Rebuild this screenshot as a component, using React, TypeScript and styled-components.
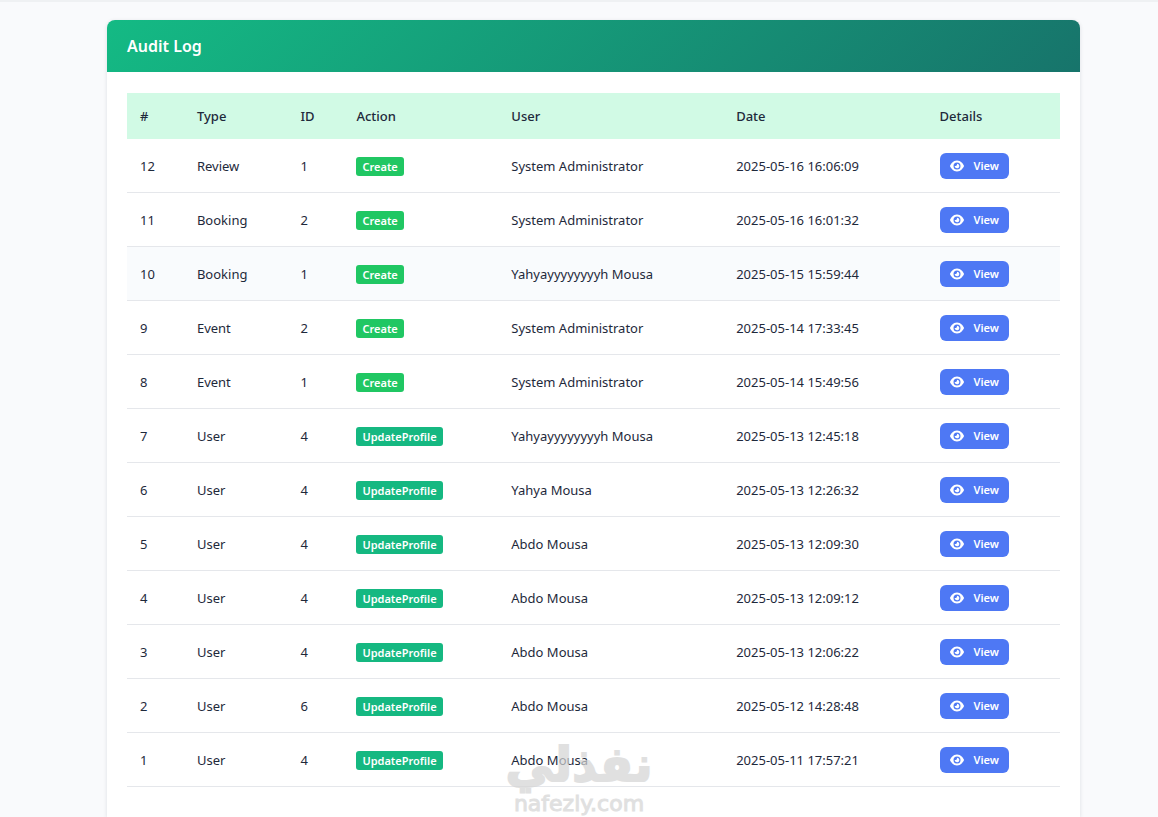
import React from "react";
import styled, { createGlobalStyle } from "styled-components";
import { FaEye } from "react-icons/fa6";

const GlobalStyle = createGlobalStyle`
  *, *::before, *::after { box-sizing: border-box; }
  body {
    margin: 0;
    background: #f9fafc;
    color: #1e293b;
    font-family: "Segoe UI", "Noto Sans", "Open Sans", sans-serif;
    font-size: 13px;
    line-height: 20px;
  }
`;

const Page = styled.div`
  position: relative;
  display: flex;
  flex-direction: column;
  min-height: 100vh;
  padding: 18px 78px 0 107px;
  border-top: 2px solid #eff1f3;
`;

const Card = styled.main`
  flex: 1;
  background: #fff;
  border-radius: 8px 8px 0 0;
  box-shadow: 0 1px 4px rgba(15, 23, 42, 0.12);
`;

const CardHeader = styled.header`
  padding: 14px 20px;
  border-radius: 8px 8px 0 0;
  background: linear-gradient(135deg, #14ba84 0%, #17746b 100%);
`;

const Title = styled.h1`
  margin: 0;
  color: #fff;
  font-size: 16px;
  font-weight: 600;
  line-height: 24px;
`;

const CardBody = styled.div`
  padding: 21px 20px;
`;

const Table = styled.table`
  width: 100%;
  table-layout: fixed;
  border-collapse: separate;
  border-spacing: 0;
`;

const HeadCell = styled.th<{ $width?: string }>`
  width: ${(p) => p.$width ?? "auto"};
  padding: 13px;
  background: #d1fae5;
  text-align: left;
  font-weight: 500;
`;

const Row = styled.tr<{ $active?: boolean }>`
  background: ${(p) => (p.$active ? "#f9fbfd" : "transparent")};
`;

const Cell = styled.td`
  height: 54px;
  padding: 0 13px;
  border-bottom: 1px solid #e5e7eb;
  vertical-align: middle;
  white-space: nowrap;
`;

const Badge = styled.span<{ $kind: Action }>`
  display: inline-block;
  padding: 0 6px;
  border-radius: 3px;
  background: ${(p) => (p.$kind === "Create" ? "#20c763" : "#15b881")};
  color: #fff;
  font-size: 11px;
  font-weight: 600;
  line-height: 19px;
  vertical-align: middle;
`;

const ViewButton = styled.button`
  display: flex;
  align-items: center;
  gap: 10px;
  height: 26px;
  padding: 0 10px;
  border: 0;
  border-radius: 6px;
  background: #4e78f4;
  color: #fff;
  font: inherit;
  font-size: 11px;
  font-weight: 600;
  cursor: pointer;
`;

const Watermark = styled.div`
  position: absolute;
  right: 0;
  bottom: 0;
  left: 0;
  display: flex;
  justify-content: center;
  pointer-events: none;
`;

type Action = "Create" | "UpdateProfile";

const columns = [
  { label: "#", width: "6.1%" },
  { label: "Type", width: "11.1%" },
  { label: "ID", width: "6%" },
  { label: "Action", width: "16.6%" },
  { label: "User", width: "24.1%" },
  { label: "Date", width: "21.8%" },
  { label: "Details" },
];

const entries: [number, string, number, Action, string, string][] = [
  [12, "Review", 1, "Create", "System Administrator", "2025-05-16 16:06:09"],
  [11, "Booking", 2, "Create", "System Administrator", "2025-05-16 16:01:32"],
  [10, "Booking", 1, "Create", "Yahyayyyyyyyyh Mousa", "2025-05-15 15:59:44"],
  [9, "Event", 2, "Create", "System Administrator", "2025-05-14 17:33:45"],
  [8, "Event", 1, "Create", "System Administrator", "2025-05-14 15:49:56"],
  [7, "User", 4, "UpdateProfile", "Yahyayyyyyyyyh Mousa", "2025-05-13 12:45:18"],
  [6, "User", 4, "UpdateProfile", "Yahya Mousa", "2025-05-13 12:26:32"],
  [5, "User", 4, "UpdateProfile", "Abdo Mousa", "2025-05-13 12:09:30"],
  [4, "User", 4, "UpdateProfile", "Abdo Mousa", "2025-05-13 12:09:12"],
  [3, "User", 4, "UpdateProfile", "Abdo Mousa", "2025-05-13 12:06:22"],
  [2, "User", 6, "UpdateProfile", "Abdo Mousa", "2025-05-12 14:28:48"],
  [1, "User", 4, "UpdateProfile", "Abdo Mousa", "2025-05-11 17:57:21"],
];

export default function App() {
  return (
    <>
      <GlobalStyle />
      <Page>
        <Card>
          <CardHeader>
            <Title>Audit Log</Title>
          </CardHeader>
          <CardBody>
            <Table>
              <thead>
                <tr>
                  {columns.map((c) => (
                    <HeadCell key={c.label} scope="col" $width={c.width}>
                      {c.label}
                    </HeadCell>
                  ))}
                </tr>
              </thead>
              <tbody>
                {entries.map(([no, type, id, action, user, date]) => (
                  <Row key={no} $active={no === 10}>
                    <Cell>{no}</Cell>
                    <Cell>{type}</Cell>
                    <Cell>{id}</Cell>
                    <Cell>
                      <Badge $kind={action}>{action}</Badge>
                    </Cell>
                    <Cell>{user}</Cell>
                    <Cell>{date}</Cell>
                    <Cell>
                      <ViewButton type="button">
                        <FaEye size={14} aria-hidden />
                        View
                      </ViewButton>
                    </Cell>
                  </Row>
                ))}
              </tbody>
            </Table>
          </CardBody>
        </Card>
        <Watermark>
          <svg width="160" height="84" viewBox="0 0 160 84" role="img" aria-label="نفذلي nafezly.com">
            <g
              fill="#d4d4d4"
              stroke="#d4d4d4"
              opacity="0.7"
              textAnchor="middle"
              fontFamily="'DejaVu Sans', sans-serif"
            >
              <text x="80" y="48" fontSize="48" fontWeight="700" strokeWidth="2" direction="rtl">
                نفذلي
              </text>
              <text x="80" y="78" fontSize="22" strokeWidth="1">
                nafezly.com
              </text>
            </g>
          </svg>
        </Watermark>
      </Page>
    </>
  );
}
